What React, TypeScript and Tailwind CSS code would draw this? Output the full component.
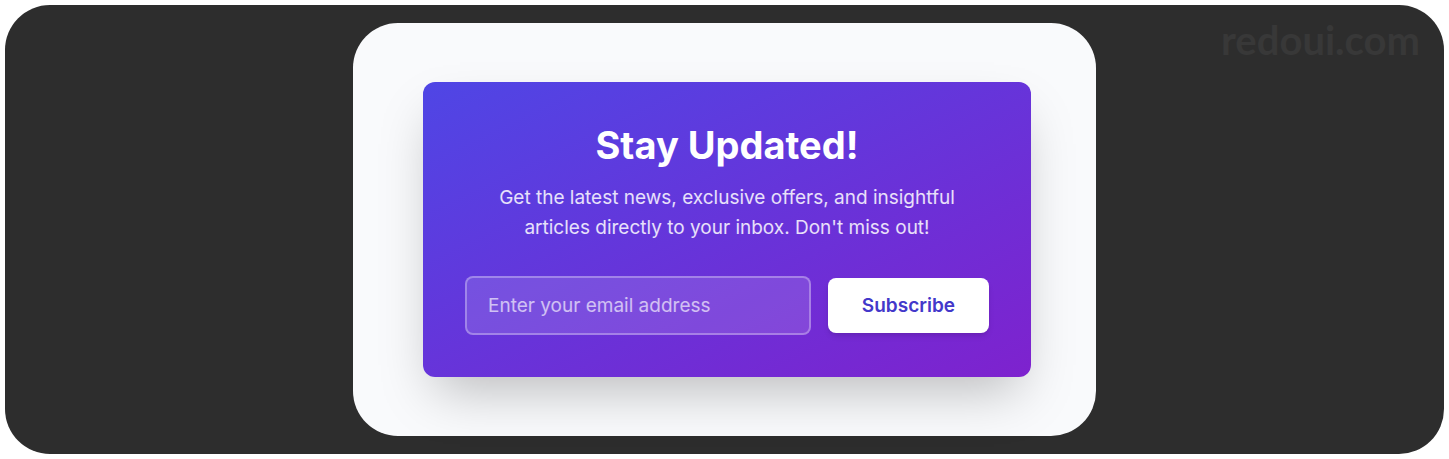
export default function App() {
  return (
    <div className="flex min-h-screen bg-white p-[5px] font-['Inter',sans-serif]">
      <div className="relative flex flex-1 justify-center rounded-[45px] bg-[#2d2d2d] py-[18px]">
        <span className="absolute top-[10px] right-[24px] font-['Lato',sans-serif] text-[40px] leading-[50px] font-bold text-[#383838]">
          redoui.com
        </span>
        <main className="relative flex w-full max-w-[743px] items-center justify-center rounded-[45px] bg-[#f9fafc] pl-[5px]">
          <section className="w-full max-w-[608px] rounded-xl bg-[linear-gradient(to_bottom_right,#4f46e5,#7e22ce)] p-[42px] text-center shadow-2xl">
            <h1 className="text-[38px] leading-[42px] font-bold text-white">Stay Updated!</h1>
            <p className="mx-auto mt-[17px] max-w-[500px] text-[19px] leading-[30px] text-white/85">
              Get the latest news, exclusive offers, and insightful articles directly to your inbox. Don't miss out!
            </p>
            <form className="mt-[33px] flex items-center gap-[17px]" onSubmit={(e) => e.preventDefault()}>
              <input
                type="email"
                aria-label="Email address"
                placeholder="Enter your email address"
                className="h-[59px] min-w-0 flex-1 rounded-lg border-2 border-white/30 bg-white/13 px-[21px] text-[19px] text-white placeholder:text-white/65"
              />
              <button
                type="submit"
                className="rounded-lg bg-white px-[34px] pt-[14px] pb-[13px] text-[19px] leading-[28px] font-semibold text-[#4338ca] shadow-md"
              >
                Subscribe
              </button>
            </form>
          </section>
        </main>
      </div>
    </div>
  );
}
